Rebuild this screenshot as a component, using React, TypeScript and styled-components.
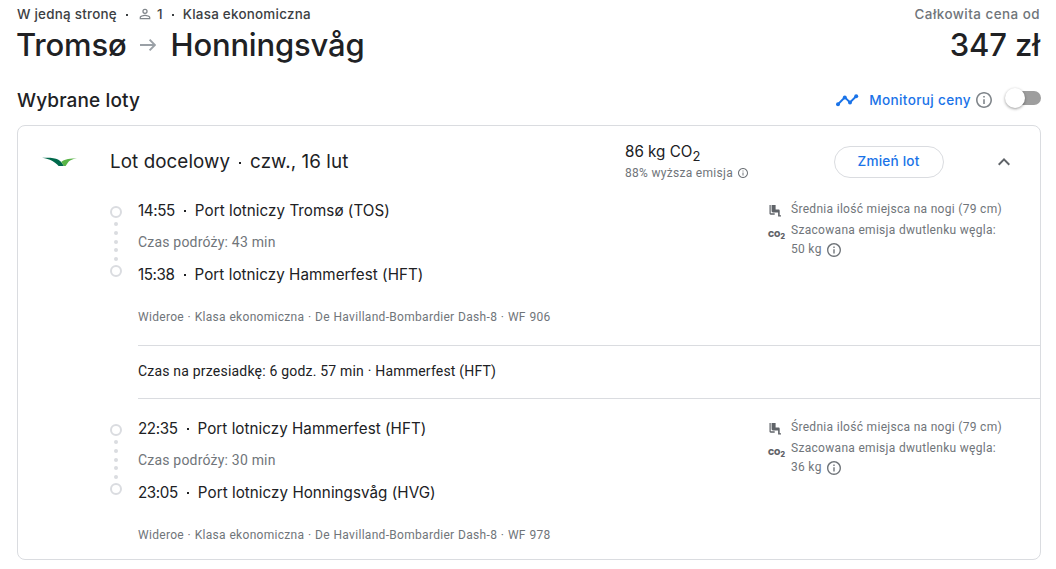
import styled, { createGlobalStyle } from 'styled-components';

const theme = {
  colors: {
    text: '#202124',
    textSecondary: '#70757a',
    textMuted: '#3c4043',
    icon: '#5f6368',
    border: '#dadce0',
    primary: '#1a73e8',
  },
  display: "Inter, 'Liberation Sans', sans-serif",
  body: "Roboto, 'Liberation Sans', sans-serif",
};

const GlobalStyle = createGlobalStyle`
  * {
    box-sizing: border-box;
  }

  body {
    margin: 0;
    background: #fff;
    color: ${theme.colors.text};
    font-family: ${theme.body};
  }

  svg {
    display: block;
    flex: none;
  }
`;

const Page = styled.main`
  width: 1056px;
  height: 569px;
  padding: 4px 15px 0 17px;
`;

const Summary = styled.header`
  display: flex;
  justify-content: space-between;
  height: 82px;
  font-family: ${theme.display};
`;

const SummaryPrice = styled.div`
  display: flex;
  flex-direction: column;
  align-items: flex-end;
  padding-right: 1px;
`;

const Meta = styled.div<{ $muted?: boolean }>`
  display: flex;
  align-items: center;
  height: 20px;
  font-size: 13.4px;
  font-weight: 500;
  letter-spacing: ${(p) => (p.$muted ? '0.48px' : '0.25px')};
  color: ${(p) => (p.$muted ? theme.colors.textSecondary : theme.colors.textMuted)};
  white-space: pre;
`;

const Dot = styled.span<{ $gap: number }>`
  width: 2px;
  height: 2px;
  margin: 2px ${(p) => p.$gap}px 0;
  background: currentColor;
`;

const Passengers = styled.span`
  display: flex;
  align-items: center;
  gap: 6px;
  padding-left: 2px;

  svg {
    color: #80868b;
  }
`;

const Route = styled.h1`
  display: flex;
  align-items: center;
  height: 40px;
  margin: 0 0 0 -1px;
  font-size: 31px;
  font-weight: 500;
  letter-spacing: -0.18px;

  svg {
    margin: 2px 14px 0 14px;
    color: #9aa0a6;
  }
`;

const Price = styled.div`
  margin-top: 1px;
  font-size: 31px;
  font-weight: 500;
  line-height: 40px;
  letter-spacing: -0.1px;
`;

const SectionBar = styled.div`
  display: flex;
  align-items: center;
  justify-content: space-between;
  height: 28px;
  margin-bottom: 11px;
  font-family: ${theme.display};
`;

const SectionTitle = styled.h2`
  margin: 0;
  font-size: 19px;
  font-weight: 500;
  letter-spacing: 0.12px;
`;

const Tracking = styled.div`
  display: flex;
  align-items: center;
  color: ${theme.colors.primary};
  font-size: 13.6px;
  font-weight: 500;
  letter-spacing: 0.34px;
`;

const TrackingLabel = styled.span`
  margin: 0 5px 0 10px;
`;

const Switch = styled.button`
  display: flex;
  align-items: center;
  width: 32px;
  height: 14px;
  margin: -4px 0 0 17px;
  padding: 0;
  border: 0;
  border-radius: 7px;
  background: #9e9e9e;
`;

const SwitchThumb = styled.span`
  flex: none;
  width: 20px;
  height: 20px;
  margin-left: -4px;
  border-radius: 50%;
  background: #fff;
  box-shadow: 0 1px 3px rgba(0, 0, 0, 0.4);
`;

const Card = styled.section`
  height: 435px;
  border: 1px solid ${theme.colors.border};
  border-radius: 8px;
`;

const CardHeader = styled.div`
  display: grid;
  grid-template-columns: 68px 515px 209px 110px 1fr;
  align-items: center;
  height: 71px;
  margin-bottom: 1px;
  padding-left: 24px;
`;

const CardTitle = styled.h3`
  display: flex;
  align-items: center;
  margin: 0;
  font-family: ${theme.display};
  font-size: 18.8px;
  font-weight: 380;
  letter-spacing: 0.08px;
`;

const Emissions = styled.div`
  display: flex;
  flex-direction: column;
`;

const EmissionsValue = styled.div`
  height: 22px;
  font-family: ${theme.display};
  font-size: 15.2px;
  font-weight: 370;
  line-height: 20px;
  letter-spacing: 0;

  sub {
    font-size: 13px;
    line-height: 0;
    vertical-align: -4px;
  }
`;

const EmissionsNote = styled.div`
  display: flex;
  align-items: center;
  gap: 5px;
  height: 18px;
  color: ${theme.colors.textSecondary};
  font-size: 12px;
  letter-spacing: 0.3px;
`;

const ChangeButton = styled.button`
  height: 32px;
  padding: 0 1px 2px 0;
  border: 1px solid ${theme.colors.border};
  border-radius: 16px;
  background: #fff;
  color: ${theme.colors.primary};
  font-family: ${theme.display};
  font-size: 13.6px;
  font-weight: 500;
  letter-spacing: 0.2px;
`;

const Chevron = styled.div`
  padding-left: 48px;
  color: ${theme.colors.icon};
`;

const Leg = styled.article`
  display: grid;
  grid-template-columns: 28px 1fr 273px;
  height: 147px;
  padding-left: 92px;
`;

const Track = styled.div`
  display: flex;
  flex-direction: column;
  align-items: center;
  width: 12px;
  height: 71px;
  margin-top: 8px;
`;

const Stop = styled.span`
  flex: none;
  width: 12px;
  height: 12px;
  border: 2px solid ${theme.colors.border};
  border-radius: 50%;
`;

const TrackDots = styled.div`
  display: flex;
  flex: 1;
  flex-direction: column;
  justify-content: space-between;
  padding: 4px 0;

  span {
    width: 4px;
    height: 4px;
    border-radius: 50%;
    background: ${theme.colors.border};
  }
`;

const Airport = styled.div`
  display: flex;
  align-items: center;
  height: 24px;
  font-family: ${theme.display};
  font-size: 15.2px;
  font-weight: 370;
  letter-spacing: 0.04px;
`;

const Time = styled.span`
  letter-spacing: -0.4px;
`;

const Duration = styled.div`
  margin: 10px 0;
  color: ${theme.colors.textSecondary};
  font-size: 14px;
  line-height: 20px;
  letter-spacing: 0.2px;
`;

const Carrier = styled.div`
  margin-top: 23px;
  color: ${theme.colors.textSecondary};
  font-size: 12px;
  line-height: 16px;
  letter-spacing: 0.3px;
  word-spacing: 0.35px;
`;

const Details = styled.ul`
  margin: 2px 0 0;
  padding: 0;
  list-style: none;
  color: ${theme.colors.textSecondary};
  font-size: 12px;
  line-height: 19px;
  letter-spacing: 0.3px;
`;

const Detail = styled.li`
  display: grid;
  grid-template-columns: 24px 1fr;
  align-items: start;
`;

const DetailIcon = styled.span`
  display: flex;
  align-items: center;
  height: 21px;
  color: ${theme.colors.icon};
`;

const CarbonMark = styled.span`
  display: flex;
  align-items: flex-end;
  height: 14px;
  margin: 4px 0 0 1px;
  font-family: ${theme.display};
  font-size: 8.2px;
  font-weight: 900;
  line-height: 13px;
  letter-spacing: 0;

  small {
    font-size: 7px;
    line-height: 8px;
  }
`;

const InlineInfo = styled.span`
  display: flex;
  align-items: center;
  gap: 5px;
`;

const Layover = styled.div`
  height: 54px;
  margin: 0 0 17px 120px;
  border: solid ${theme.colors.border};
  border-width: 1px 0;
  font-size: 14px;
  line-height: 51px;
  letter-spacing: 0.2px;
`;

interface FlightLeg {
  departure: string;
  from: string;
  duration: string;
  arrival: string;
  to: string;
  flight: string;
  carbon: string;
}

const legs: FlightLeg[] = [
  {
    departure: '14:55',
    from: 'Port lotniczy Tromsø (TOS)',
    duration: '43 min',
    arrival: '15:38',
    to: 'Port lotniczy Hammerfest (HFT)',
    flight: 'WF 906',
    carbon: '50 kg',
  },
  {
    departure: '22:35',
    from: 'Port lotniczy Hammerfest (HFT)',
    duration: '30 min',
    arrival: '23:05',
    to: 'Port lotniczy Honningsvåg (HVG)',
    flight: 'WF 978',
    carbon: '36 kg',
  },
];

const InfoIcon = ({ size, color = theme.colors.textSecondary }: { size: number; color?: string }) => (
  <svg width={size} height={size} viewBox="2 2 20 20" fill={color}>
    <path d="M11 7h2v2h-2zm0 4h2v6h-2zm1-9C6.48 2 2 6.48 2 12s4.48 10 10 10 10-4.48 10-10S17.52 2 12 2zm0 18c-4.41 0-8-3.59-8-8s3.59-8 8-8 8 3.59 8 8-3.59 8-8 8z" />
  </svg>
);

const PersonIcon = () => (
  <svg width="12" height="12" viewBox="3 3 18 18" fill="currentColor">
    <path d="M12 5.9a2.1 2.1 0 1 1 0 4.2 2.1 2.1 0 0 1 0-4.2m0 9c2.97 0 6.1 1.46 6.1 2.1v1.1H5.9V17c0-.64 3.13-2.1 6.1-2.1M12 4a4 4 0 1 0 0 8 4 4 0 0 0 0-8zm0 9c-2.67 0-8 1.34-8 4v3h16v-3c0-2.66-5.33-4-8-4z" />
  </svg>
);

const ArrowIcon = () => (
  <svg width="16" height="12" viewBox="0 0 16 12" fill="none" stroke="currentColor" strokeWidth="1.9">
    <path d="M0 6h14.6M9.6 .7 14.9 6l-5.3 5.3" />
  </svg>
);

const TrendIcon = () => (
  <svg width="24" height="14" viewBox="0 0 24 14" fill={theme.colors.primary}>
    <path d="M3 11.2 9.8 4.4l5.2 5 6.2-6.2" fill="none" stroke={theme.colors.primary} strokeWidth="2" />
    <circle cx="3" cy="11.2" r="2" />
    <circle cx="9.8" cy="4.4" r="2" />
    <circle cx="15" cy="9.4" r="2" />
    <circle cx="21.2" cy="3.2" r="2" />
  </svg>
);

const AirlineLogo = () => (
  <svg width="36" height="10" viewBox="0 0 36 10">
    <path d="M0 .8C7 .4 13 .8 16 2.4c1.400.8 2.400 1.700 3.200 2.600L22 8.900H16.600C13.200 5.400 8 1.700 0 .8z" fill="#00694b" />
    <path d="M22 8.900 19.200 5C22 2.400 26 1.200 35 1.400c-5 .6-7.400 1.800-9 4L23.600 8.900z" fill="#59b447" />
  </svg>
);

const SeatIcon = () => (
  <svg width="14" height="14" viewBox="-1 1 14 14" fill="currentColor">
    <path d="M1.500 2h1.200v8.300h4v1.500H2.700c-.7 0-1.200-.5-1.200-1.200z" />
    <path d="M3.600 2h4v4.600h2.900c.7 0 1.200.5 1.200 1.200v4.400H13v1.400h-2.900V9.500H5c-.8 0-1.400-.6-1.400-1.400z" />
  </svg>
);

const ExpandLessIcon = () => (
  <svg width="24" height="24" viewBox="0 0 24 24" fill="currentColor">
    <path d="M12 8l-6 6 1.410 1.410L12 10.830l4.590 4.580L18 14z" />
  </svg>
);

const FlightLegRow = ({ leg }: { leg: FlightLeg }) => (
  <Leg>
    <Track>
      <Stop />
      <TrackDots>
        {[0, 1, 2, 3, 4].map((i) => (
          <span key={i} />
        ))}
      </TrackDots>
      <Stop />
    </Track>
    <div>
      <Airport>
        <Time>{leg.departure}</Time>
        <Dot $gap={9} />
        {leg.from}
      </Airport>
      <Duration>Czas podróży: {leg.duration}</Duration>
      <Airport>
        <Time>{leg.arrival}</Time>
        <Dot $gap={9} />
        {leg.to}
      </Airport>
      <Carrier>Wideroe · Klasa ekonomiczna · De Havilland-Bombardier Dash-8 · {leg.flight}</Carrier>
    </div>
    <Details>
      <Detail>
        <DetailIcon>
          <SeatIcon />
        </DetailIcon>
        Średnia ilość miejsca na nogi (79 cm)
      </Detail>
      <Detail>
        <DetailIcon>
          <CarbonMark>
            CO<small>2</small>
          </CarbonMark>
        </DetailIcon>
        <div>
          Szacowana emisja dwutlenku węgla:
          <InlineInfo>
            {leg.carbon} <InfoIcon size={14} />
          </InlineInfo>
        </div>
      </Detail>
    </Details>
  </Leg>
);

export default function App() {
  return (
    <>
      <GlobalStyle />
      <Page>
        <Summary>
          <div>
            <Meta>
              W jedną stronę
              <Dot $gap={9} />
              <Passengers>
                <PersonIcon />1
              </Passengers>
              <Dot $gap={9} />
              Klasa ekonomiczna
            </Meta>
            <Route>
              Tromsø
              <ArrowIcon />
              Honningsvåg
            </Route>
          </div>
          <SummaryPrice>
            <Meta $muted>Całkowita cena od</Meta>
            <Price>347 zł</Price>
          </SummaryPrice>
        </Summary>
        <SectionBar>
          <SectionTitle>Wybrane loty</SectionTitle>
          <Tracking>
            <TrendIcon />
            <TrackingLabel>Monitoruj ceny</TrackingLabel>
            <InfoIcon size={16} color="#80868b" />
            <Switch type="button" role="switch" aria-checked={false}>
              <SwitchThumb />
            </Switch>
          </Tracking>
        </SectionBar>
        <Card>
          <CardHeader>
            <AirlineLogo />
            <CardTitle>
              Lot docelowy
              <Dot $gap={9} />
              czw., 16 lut
            </CardTitle>
            <Emissions>
              <EmissionsValue>
                86 kg CO<sub>2</sub>
              </EmissionsValue>
              <EmissionsNote>
                88% wyższa emisja <InfoIcon size={10} />
              </EmissionsNote>
            </Emissions>
            <ChangeButton type="button">Zmień lot</ChangeButton>
            <Chevron>
              <ExpandLessIcon />
            </Chevron>
          </CardHeader>
          <FlightLegRow leg={legs[0]} />
          <Layover>Czas na przesiadkę: 6 godz. 57 min · Hammerfest (HFT)</Layover>
          <FlightLegRow leg={legs[1]} />
        </Card>
      </Page>
    </>
  );
}
